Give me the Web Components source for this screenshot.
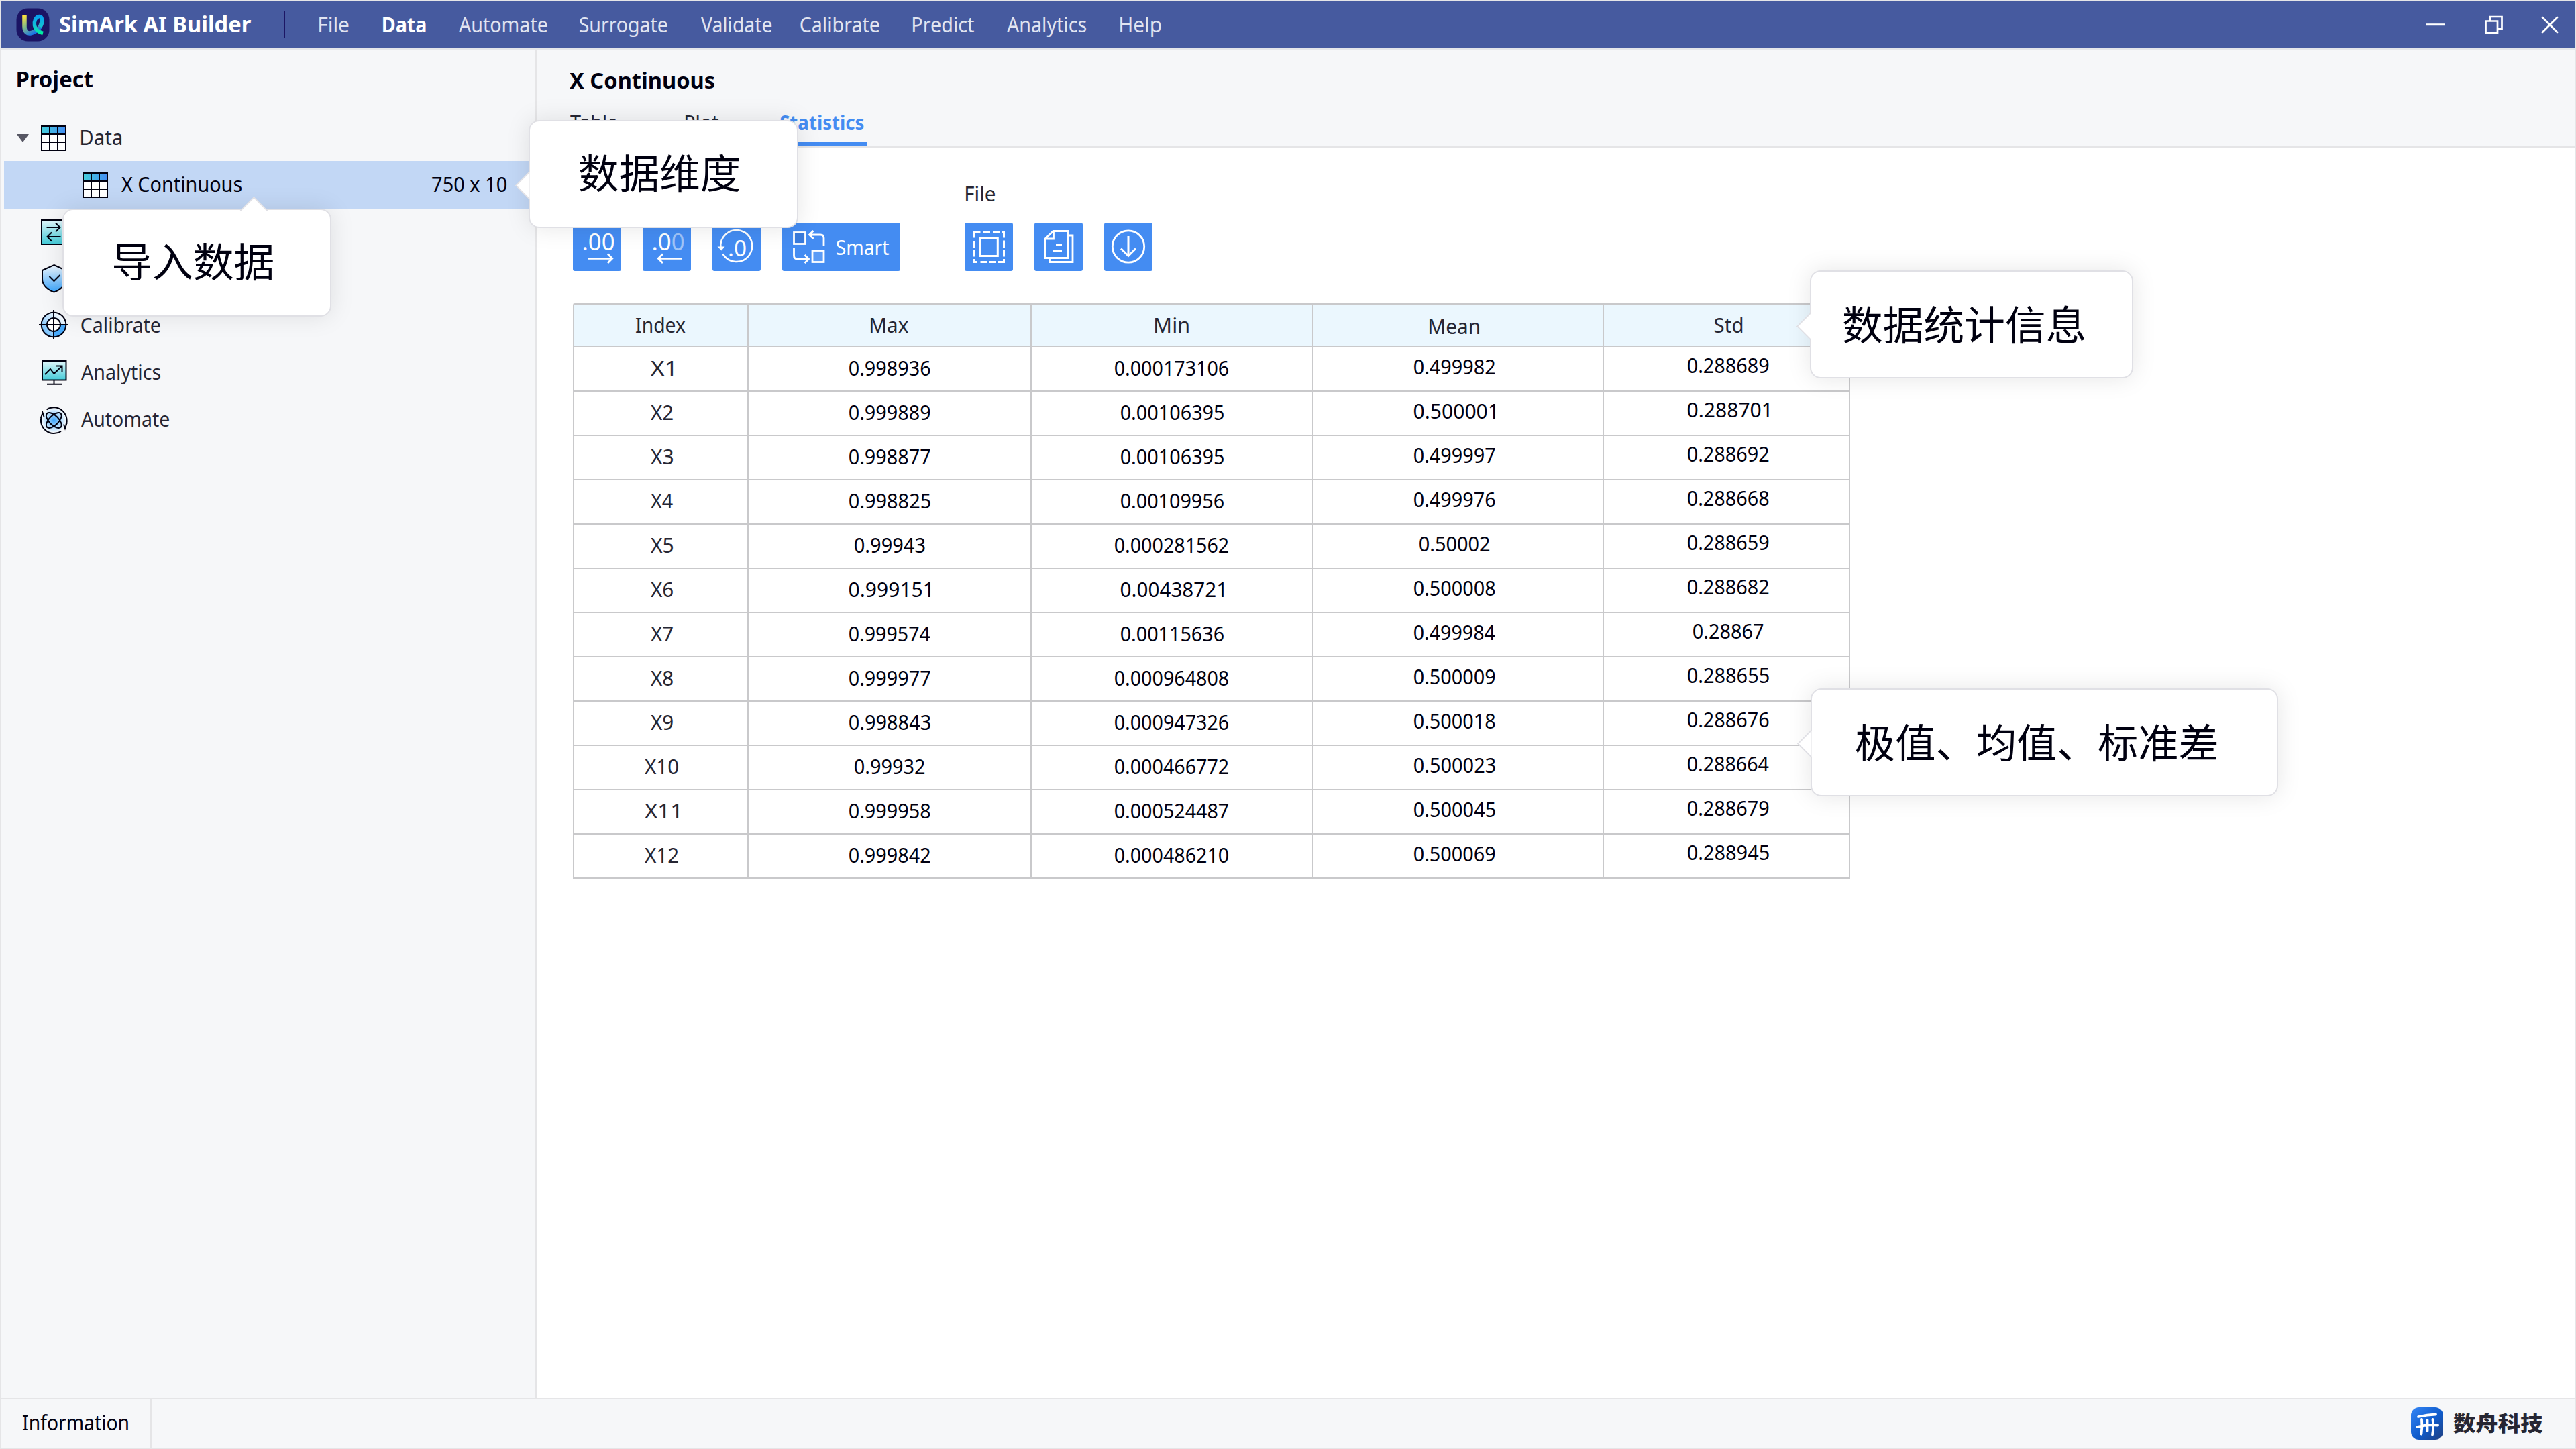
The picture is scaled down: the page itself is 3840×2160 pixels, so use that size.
<!DOCTYPE html>
<html lang="en">
<head>
<meta charset="utf-8">
<title>SimArk AI Builder</title>
<style>
    body{
        margin: 0;
        background-color: #fff;
        font-family: "Noto Sans", "Noto Sans CJK SC", sans-serif;
        font-size: 30px;
        color: #262633;
    }
</style>
</head>
<body>

<app-shell></app-shell>

<script>

function makeTemplate(html){
    const template = document.createElement('template');
    template.innerHTML = html;
    return template;
}

// one line of text, fitted so that its ink is exactly "w" pixels wide
const labelTemplate = makeTemplate(`
    <style>
    :host{
        display: block;
        flex: none;
        height: 40px;
        line-height: 40px;
        white-space: nowrap;
    }

    span{
        display: inline-block;
        transform-origin: 0 50%;
    }
    </style>
    <span><slot></slot></span>
`);

const pen = document.createElement('canvas').getContext('2d');

class FitLabel extends HTMLElement{
    constructor(){
        super();
        this.attachShadow({mode: 'open'});
        this.shadowRoot.appendChild(labelTemplate.content.cloneNode(true));
    }

    connectedCallback(){
        const width = Number(this.getAttribute('w'));
        const style = getComputedStyle(this);
        // measured at ten times the size, the canvas rounds to whole pixels
        pen.font = `${style.fontWeight} ${parseFloat(style.fontSize) * 10}px ${style.fontFamily}`;
        const m = pen.measureText(this.textContent);
        const left = m.actualBoundingBoxLeft / 10;
        const right = m.actualBoundingBoxRight / 10;
        const scale = width / (left + right);
        this.style.width = width + 'px';
        const span = this.shadowRoot.querySelector('span');
        span.style.transform = `translateX(${left * scale}px) scaleX(${scale})`;
    }
}


const icons = {
    logo: [50, 50, `
        <defs>
            <linearGradient id="u" x1="0" y1="0" x2="0.6" y2="1"><stop offset="0" stop-color="#ffe23a"/><stop offset="0.5" stop-color="#7fb98a"/><stop offset="1" stop-color="#1673e8"/></linearGradient>
            <linearGradient id="q" x1="0" y1="0" x2="0" y2="1"><stop offset="0" stop-color="#08a2ee"/><stop offset="0.55" stop-color="#10bfd6"/><stop offset="1" stop-color="#00ef9d"/></linearGradient>
        </defs>
        <rect x="0.5" y="0.5" width="49" height="49" rx="17" fill="#1b1464"/>
        <path d="M12.500 11V27C12.500 36 17 38.500 23 37C31 35 38 28 38.500 19" fill="none" stroke="url(#u)" stroke-width="6.500"/>
        <path d="M36 28C40 21 39.500 12 34.500 12.500C29 13 26.500 20 27.500 26C28.500 32 33 35.500 40 37.500" fill="none" stroke="url(#q)" stroke-width="5.500"/>`],
    minimize: [28, 28, `<path d="M0 13.700H28" stroke="#fff" stroke-width="3"/>`],
    restore: [28, 28, `<path d="M1.500 8.500H19V26H1.500ZM8 8V2H25.500V20H20" fill="none" stroke="#fff" stroke-width="2.700"/>`],
    close: [28, 28, `<path d="M3 3L25 25M25 3L3 25" stroke="#fff" stroke-width="2.800" stroke-linecap="round"/>`],
    grid: [50, 50, `
        <defs><linearGradient id="g"><stop offset="0" stop-color="#45cfdc"/><stop offset="1" stop-color="#438cf3"/></linearGradient></defs>
        <rect x="7" y="7" width="36" height="36" fill="#fff"/>
        <rect x="7" y="7" width="36" height="12" fill="url(#g)"/>
        <path d="M7 7H43V43H7ZM7 19H43M7 31H43M19 7V43M31 7V43" fill="none" stroke="#000010" stroke-width="2"/>`],
    swap: [50, 50, `
        <defs><linearGradient id="g" x2="0" y2="1"><stop offset="0" stop-color="#e2f6fb"/><stop offset="1" stop-color="#43cbd8"/></linearGradient></defs>
        <rect x="7" y="7" width="36" height="36" fill="url(#g)" stroke="#000010" stroke-width="2"/>
        <path d="M14.500 18H35M28 11.500L34.500 18L28 24.500M35.500 32H15M22 25.500L15.500 32L22 38.500" fill="none" stroke="#000010" stroke-width="2"/>`],
    shield: [50, 50, `
        <defs><linearGradient id="g" x2="0" y2="1"><stop offset="0" stop-color="#f0f8ff"/><stop offset="1" stop-color="#3ba4fb"/></linearGradient></defs>
        <path d="M25.500 4L43 12V25C43 34 35 41.500 25.500 44.500C16 41.500 8 34 8 25V12Z" fill="url(#g)" stroke="#000010" stroke-width="2"/>
        <path d="M18.500 21L25.500 28L34.500 19" fill="none" stroke="#000010" stroke-width="2"/>`],
    target: [50, 50, `
        <defs><linearGradient id="g" x1="1" y1="0" x2="0" y2="1"><stop offset="0.200" stop-color="#f4faff"/><stop offset="1" stop-color="#58b3fc"/></linearGradient></defs>
        <circle cx="25" cy="23" r="18.300" fill="url(#g)"/>
        <path d="M25 23H43.300A18.300 18.300 0 0 1 25 41.300Z" fill="#49aafb"/>
        <circle cx="25" cy="23" r="10" fill="#fff"/>
        <path d="M25 1V45M3 23H47" stroke="#000010" stroke-width="2"/>
        <g fill="none" stroke="#000010" stroke-width="2"><circle cx="25" cy="23" r="18.300"/><circle cx="25" cy="23" r="10"/></g>`],
    monitor: [50, 50, `
        <defs><linearGradient id="g" x2="0" y2="1"><stop offset="0" stop-color="#e2f6fb"/><stop offset="1" stop-color="#43cbd8"/></linearGradient></defs>
        <rect x="8" y="7" width="35.500" height="28.500" fill="url(#g)" stroke="#000010" stroke-width="2"/>
        <path d="M25.500 36V41.500M15 41.700H37M12 27L20 19L25.500 26L37 15M28.500 14.500H37.500V23.500" fill="none" stroke="#000010" stroke-width="2"/>`],
    atom: [50, 50, `
        <defs><radialGradient id="g"><stop offset="0" stop-color="#3ba4fb"/><stop offset="0.400" stop-color="#8dcafc"/><stop offset="1" stop-color="#f0f8fe"/></radialGradient></defs>
        <circle cx="25.300" cy="25.500" r="18" fill="url(#g)"/>
        <g fill="none" stroke="#000010" stroke-width="2">
            <ellipse cx="25.300" cy="25.500" rx="14.500" ry="7" transform="rotate(45 25.300 25.500)"/>
            <ellipse cx="25.300" cy="25.500" rx="14.500" ry="7" transform="rotate(-45 25.300 25.500)"/>
            <path d="M14.500 9.500A19.500 19.500 0 0 1 43.500 32.400M36 42A19.500 19.500 0 0 1 7.100 19"/>
            <path d="M6 22L8.500 14L10.500 20M44.600 29.500L42 37.500L40 31.500"/>
        </g>`],
    decMore: [72, 72, `
        <text x="13.500" y="40.500" textLength="49" lengthAdjust="spacingAndGlyphs" font-size="35" fill="#fff">.00</text>
        <path d="M23 53.300H58M52 46.500L58.700 53.300L52 60" fill="none" stroke="#fff" stroke-width="2.800"/>`],
    decLess: [72, 72, `
        <text x="13.500" y="40.500" textLength="49" lengthAdjust="spacingAndGlyphs" font-size="35" fill="#fff">.0<tspan fill-opacity="0.5">0</tspan></text>
        <path d="M59 53.300H24M30 46.500L23.300 53.300L30 60" fill="none" stroke="#fff" stroke-width="2.800"/>`],
    decReset: [72, 72, `
        <text x="23" y="49.500" textLength="28" lengthAdjust="spacingAndGlyphs" font-size="33" fill="#fff">.0</text>
        <path d="M12.500 38A23.500 23.500 0 1 1 15.500 46.500" fill="none" stroke="#fff" stroke-width="2.500"/>
        <path d="M7.500 35.500L13.500 41.500L18.500 35.500Z" fill="#fff"/>`],
    smart: [72, 72, `
        <g fill="none" stroke="#fff" stroke-width="2.800">
            <rect x="17.500" y="14.500" width="17" height="17" fill="#3a7bdc"/>
            <rect x="45" y="41.500" width="17" height="17" fill="#5c9cf6"/>
            <path d="M62 34V23Q62 18 57 18H41M46.500 12L40.500 18L46.500 24M17.500 38V49Q17.500 54 22.500 54H39M33.500 48L39.500 54L33.500 60"/>
        </g>`],
    selectAll: [72, 72, `
        <path d="M13.500 22.500V14.500H23.500M28 14.500H38M42 14.500H52M55 14.500H58.500V22.500M58.500 26.500V37M58.500 40.500V50.500M58.500 54V58.500H50M46 58.500H37M33 58.500H23.500M19 58.500H13.500V54M13.500 50.500V40.500M13.500 37V27" fill="none" stroke="#fff" stroke-width="3"/>
        <rect x="23.300" y="23.500" width="26" height="26" fill="none" stroke="#fff" stroke-width="3"/>`],
    copy: [72, 72, `
        <path d="M16 24L28 12.500H50V52.500H16ZM16 24H28.500V12.500M50 19H57V58.500H22.500V53M32 33.500H41M27 42H41" fill="none" stroke="#fff" stroke-width="2.800"/>`],
    download: [72, 72, `
        <circle cx="36" cy="35.500" r="23.700" fill="none" stroke="#fff" stroke-width="2.800"/>
        <path d="M36 20V49.500M25 38.500L36 49.500L47 38.500" fill="none" stroke="#fff" stroke-width="3"/>`],
    company: [48, 48, `
        <defs><linearGradient id="g" x2="1" y2="1"><stop offset="0" stop-color="#3586f6"/><stop offset="0.550" stop-color="#0f5bcb"/><stop offset="1" stop-color="#22407f"/></linearGradient></defs>
        <rect width="48" height="48" rx="12" fill="url(#g)"/>
        <path d="M11 14Q24 11 37 10.500M16 18Q17 29 15.500 39.500M24.500 19V35M32.500 18Q34 30 32 40.500M9 29Q24 25 40 26.500" fill="none" stroke="#fff" stroke-width="3.800" stroke-linecap="round"/>`]
};

class AppIcon extends HTMLElement{
    constructor(){
        super();
        this.attachShadow({mode: 'open'});
    }

    connectedCallback(){
        const [w, h, shapes] = icons[this.getAttribute('name')];
        this.shadowRoot.innerHTML = `
            <style>
            :host{ display: block; flex: none; }
            svg{ display: block; }
            </style>
            <svg width="${w}" height="${h}" viewBox="0 0 ${w} ${h}">${shapes}</svg>
        `;
    }
}


const titleTemplate = makeTemplate(`
    <style>
    :host{
        display: flex;
        align-items: center;
        box-sizing: border-box;
        height: 72px;
        padding-left: 22px;
        border-bottom: 2px solid #e5e6ea;
        background-color: #465a9f;
        color: #e1e4f1;
    }

    .name{
        margin: 0 49px 2px 15px;
        font-size: 32px;
        font-weight: 700;
        color: #fff;
    }

    .line{
        width: 2px;
        height: 40px;
        margin: 0 51px 2px 0;
        background-color: #1c1664;
    }

    nav{
        flex: 1;
        display: flex;
    }

    .on{
        font-weight: 700;
        color: #fff;
    }

    .window{
        display: flex;
        gap: 60px;
        padding-right: 23px;
    }
    </style>

    <app-icon name="logo"></app-icon>
    <fit-label class="name" w="285">SimArk AI Builder</fit-label>
    <div class="line"></div>
    <nav>
        <fit-label w="43.5">File</fit-label>
        <fit-label w="63.5" class="on" style="margin-left: 51.5px">Data</fit-label>
        <fit-label w="131.5" style="margin-left: 49px">Automate</fit-label>
        <fit-label w="130.5" style="margin-left: 49px">Surrogate</fit-label>
        <fit-label w="105" style="margin-left: 50.5px">Validate</fit-label>
        <fit-label w="117.5" style="margin-left: 43px">Calibrate</fit-label>
        <fit-label w="91" style="margin-left: 50.5px">Predict</fit-label>
        <fit-label w="118" style="margin-left: 48.5px">Analytics</fit-label>
        <fit-label w="60.5" style="margin-left: 51px">Help</fit-label>
    </nav>
    <div class="window">
        <app-icon name="minimize"></app-icon>
        <app-icon name="restore"></app-icon>
        <app-icon name="close" style="margin-left: -5px"></app-icon>
    </div>
`);

class TitleBar extends HTMLElement{
    constructor(){
        super();
        this.attachShadow({mode: 'open'});
        this.shadowRoot.appendChild(titleTemplate.content.cloneNode(true));
    }
}


const rowTemplate = makeTemplate(`
    <style>
    :host{
        display: flex;
        align-items: center;
        height: 70px;
        margin-left: 4px;
        padding-left: 49px;
    }

    :host([open]){
        padding-left: 19px;
    }

    :host([open])::before{
        content: "";
        width: 18px;
        height: 12px;
        margin: 0 12px 0 0;
        background-color: #565663;
        clip-path: polygon(0 0, 100% 0, 50% 100%);
    }

    :host([selected]){
        height: 72px;
        margin-top: -1px;
        margin-bottom: -1px;
        padding-left: 111px;
        background-color: #c2d7f5;
        color: #000010;
    }

    ::slotted(fit-label){
        margin: 0 0 2px 16px;
    }

    :host([selected]) ::slotted(fit-label){
        margin-left: 13.5px;
    }

    ::slotted(.size){
        margin-left: auto !important;
        margin-right: 43px !important;
    }
    </style>
    <slot></slot>
`);

class TreeRow extends HTMLElement{
    constructor(){
        super();
        this.attachShadow({mode: 'open'});
        this.shadowRoot.appendChild(rowTemplate.content.cloneNode(true));
    }
}


const sideTemplate = makeTemplate(`
    <style>
    :host{
        display: block;
        flex: none;
        box-sizing: border-box;
        width: 798px;
        padding-top: 24px;
        border-right: 2px solid #e5e5e7;
        background-color: #f6f7f9;
    }

    .title{
        margin: 0 0 33px 23.5px;
        font-size: 32px;
        font-weight: 700;
        color: #000010;
    }
    </style>

    <fit-label class="title" w="112">Project</fit-label>
    <tree-row open><app-icon name="grid"></app-icon><fit-label w="60">Data</fit-label></tree-row>
    <tree-row selected><app-icon name="grid"></app-icon><fit-label w="179">X Continuous</fit-label><fit-label class="size" w="111">750 x 10</fit-label></tree-row>
    <tree-row><app-icon name="swap"></app-icon></tree-row>
    <tree-row><app-icon name="shield"></app-icon></tree-row>
    <tree-row><app-icon name="target"></app-icon><fit-label w="117.5">Calibrate</fit-label></tree-row>
    <tree-row><app-icon name="monitor"></app-icon><fit-label w="118">Analytics</fit-label></tree-row>
    <tree-row><app-icon name="atom"></app-icon><fit-label w="131">Automate</fit-label></tree-row>
`);

class SideBar extends HTMLElement{
    constructor(){
        super();
        this.attachShadow({mode: 'open'});
        this.shadowRoot.appendChild(sideTemplate.content.cloneNode(true));
    }
}


const headTemplate = makeTemplate(`
    <style>
    :host{
        display: flex;
        flex-direction: column;
        box-sizing: border-box;
        height: 146px;
        padding: 26px 0 0 48.5px;
        border-bottom: 2px solid #e5e5e7;
        background-color: #f6f7f9;
    }

    .title{
        font-size: 32px;
        font-weight: 700;
        color: #000010;
    }

    .tabs{
        flex: 1;
        display: flex;
        margin-top: 23px;
    }

    .tab{
        box-sizing: border-box;
    }

    .on{
        padding: 0 4px 0 3px;
        border-bottom: 6px solid #448cf2;
        font-weight: 700;
        color: #448cf2;
    }
    </style>

    <fit-label class="title" w="216">X Continuous</fit-label>
    <div class="tabs">
        <div class="tab" style="margin-left: 1.5px"><fit-label w="70">Table</fit-label></div>
        <div class="tab" style="margin-left: 102px"><fit-label w="49">Plot</fit-label></div>
        <div class="tab on" style="margin-left: 89px"><fit-label w="124.5">Statistics</fit-label></div>
    </div>
`);

class PageHead extends HTMLElement{
    constructor(){
        super();
        this.attachShadow({mode: 'open'});
        this.shadowRoot.appendChild(headTemplate.content.cloneNode(true));
    }
}


const buttonTemplate = makeTemplate(`
    <style>
    :host{
        display: flex;
        align-items: center;
        height: 72px;
        border-radius: 3px;
        background-color: #448cf2;
        color: #fff;
    }

    ::slotted(fit-label){
        margin: 2px 17px 0 9px;
    }
    </style>
    <slot></slot>
`);

class ToolButton extends HTMLElement{
    constructor(){
        super();
        this.attachShadow({mode: 'open'});
        this.shadowRoot.appendChild(buttonTemplate.content.cloneNode(true));
    }
}


const toolbarTemplate = makeTemplate(`
    <style>
    :host{
        display: flex;
        align-items: flex-end;
        gap: 96px;
        height: 136px;
        padding: 48px 0 48px 54px;
    }

    .row{
        display: flex;
        gap: 32px;
    }

    .caption{
        margin: 0 0 23px 1.5px;
    }
    </style>

    <div class="row">
        <tool-button><app-icon name="decMore"></app-icon></tool-button>
        <tool-button><app-icon name="decLess"></app-icon></tool-button>
        <tool-button><app-icon name="decReset"></app-icon></tool-button>
        <tool-button><app-icon name="smart"></app-icon><fit-label w="78">Smart</fit-label></tool-button>
    </div>
    <div>
        <fit-label class="caption" w="43">File</fit-label>
        <div class="row">
            <tool-button><app-icon name="selectAll"></app-icon></tool-button>
            <tool-button><app-icon name="copy"></app-icon></tool-button>
            <tool-button><app-icon name="download"></app-icon></tool-button>
        </div>
    </div>
`);

class ToolBar extends HTMLElement{
    constructor(){
        super();
        this.attachShadow({mode: 'open'});
        this.shadowRoot.appendChild(toolbarTemplate.content.cloneNode(true));
    }
}


const heads = [['Index', 73.5], ['Max', 56], ['Min', 50], ['Mean', 74], ['Std', 41]];

const stats = [
    ['0.998936', '0.000173106', '0.499982', '0.288689'],
    ['0.999889', '0.00106395', '0.500001', '0.288701'],
    ['0.998877', '0.00106395', '0.499997', '0.288692'],
    ['0.998825', '0.00109956', '0.499976', '0.288668'],
    ['0.99943', '0.000281562', '0.50002', '0.288659'],
    ['0.999151', '0.00438721', '0.500008', '0.288682'],
    ['0.999574', '0.00115636', '0.499984', '0.28867'],
    ['0.999977', '0.000964808', '0.500009', '0.288655'],
    ['0.998843', '0.000947326', '0.500018', '0.288676'],
    ['0.99932', '0.000466772', '0.500023', '0.288664'],
    ['0.999958', '0.000524487', '0.500045', '0.288679'],
    ['0.999842', '0.000486210', '0.500069', '0.288945']
];

class StatsTable extends HTMLElement{
    constructor(){
        super();
        this.attachShadow({mode: 'open'});

        // every digit has the same advance
        const number = text => `<div class="cell"><fit-label w="${120.6 + 16.15 * (text.length - 8)}">${text}</fit-label></div>`;
        const head = heads.map(([text, w]) => `<div class="cell head"><fit-label w="${w}">${text}</fit-label></div>`).join('');
        const rows = stats.map((row, i) => `
            <div class="cell index"><fit-label w="${i < 9 ? 33 : 50}">X${i + 1}</fit-label></div>
            ${row.map(number).join('')}`).join('');

        this.shadowRoot.innerHTML = `
            <style>
            :host{
                display: grid;
                grid-template-columns: 260px 422px 420px 433px 367px;
                grid-template-rows: 64px;
                grid-auto-rows: 66px;
                width: 1902px;
                margin-left: 54px;
                border-top: 2px solid #c9c9cb;
                border-left: 2px solid #c9c9cb;
                border-top-left-radius: 3px;
                color: #000010;
            }

            .cell{
                display: flex;
                align-items: center;
                justify-content: center;
                box-sizing: border-box;
                padding-bottom: 2px;
                border-right: 2px solid #c9c9cb;
                border-bottom: 2px solid #c9c9cb;
            }

            .cell:nth-of-type(5n + 4){
                padding: 0 11px 6px 0;
            }

            .cell:nth-of-type(5n + 5){
                padding: 0 0 10px 5px;
            }

            .index{
                padding-left: 2px;
                color: #262633;
            }

            .cell.head{
                padding-top: 0;
                padding-bottom: 0;
                background-color: #ebf7fe;
                color: #262633;
            }

            .cell.head:nth-of-type(4){
                padding-top: 4px;
            }
            </style>
            ${head}${rows}
        `;
    }
}


const statusTemplate = makeTemplate(`
    <style>
    :host{
        display: flex;
        align-items: center;
        box-sizing: border-box;
        height: 74px;
        border-top: 2px solid #e5e5e7;
        background-color: #f6f7f9;
        color: #000010;
    }

    .info{
        display: flex;
        align-items: center;
        box-sizing: border-box;
        width: 224px;
        height: 72px;
        padding: 0 0 2px 32px;
        border-right: 2px solid #e5e5e7;
    }

    .brand{
        display: flex;
        align-items: center;
        gap: 14.5px;
        margin-left: auto;
        padding-right: 48px;
        font-family: "Noto Sans CJK SC", sans-serif;
        font-size: 31px;
        font-weight: 900;
        color: #262633;
    }

    .brand fit-label{
        margin-bottom: 4px;
    }
    </style>

    <div class="info"><fit-label w="157">Information</fit-label></div>
    <div class="brand" lang="zh-CN">
        <app-icon name="company"></app-icon>
        <fit-label w="133.5">数舟科技</fit-label>
    </div>
`);

class StatusBar extends HTMLElement{
    constructor(){
        super();
        this.attachShadow({mode: 'open'});
        this.shadowRoot.appendChild(statusTemplate.content.cloneNode(true));
    }
}


// speech bubble over the page, its arrow is a square turned by 45 degrees
const tipTemplate = makeTemplate(`
    <style>
    :host{
        position: absolute;
        display: flex;
        align-items: center;
        box-sizing: border-box;
        height: 161px;
        padding-bottom: 10px;
        border: 2px solid #e0e0e5;
        border-radius: 16px;
        background-color: #fff;
        box-shadow: 0 0 36px rgba(0, 0, 20, 0.1);
        font-family: "Noto Sans CJK SC", sans-serif;
        font-size: 60px;
        color: #000010;
    }

    .arrow{
        position: absolute;
        box-sizing: border-box;
        width: 31px;
        height: 31px;
        left: -16px;
        top: var(--arrow);
        margin-top: -15.5px;
        transform: rotate(-45deg);
        border: 2px solid #e0e0e5;
        border-right-color: transparent;
        border-bottom-color: transparent;
        background: #fff padding-box;
        clip-path: polygon(0 0, 100% 0, 0 100%);
    }

    :host([up]) .arrow{
        left: var(--arrow);
        top: -14px;
        margin: 0 0 0 -15.5px;
        transform: rotate(45deg);
    }
    </style>
    <div class="arrow"></div>
    <slot></slot>
`);

class TipBox extends HTMLElement{
    constructor(){
        super();
        this.attachShadow({mode: 'open'});
        this.shadowRoot.appendChild(tipTemplate.content.cloneNode(true));
    }
}


const shellTemplate = makeTemplate(`
    <style>
    :host{
        position: relative;
        display: flex;
        flex-direction: column;
        box-sizing: border-box;
        width: 3840px;
        height: 2160px;
        overflow: hidden;
        border: 2px solid #e5e5e7;
    }

    .body{
        flex: 1;
        display: flex;
    }

    main{
        flex: 1;
    }

    /* tips are placed from inside the 2px frame */
    .import{ left: 91px; top: 309px; width: 401px; padding-left: 74px; --arrow: 283px; }
    .size{ left: 786px; top: 177px; width: 402px; padding-left: 73.5px; --arrow: 95px; }
    .stats{ left: 2696px; top: 401px; width: 482px; padding-left: 48px; padding-bottom: 6px; --arrow: 81.5px; }
    .terms{ left: 2697px; top: 1024px; width: 697px; padding-left: 64.5px; padding-bottom: 5px; --arrow: 80px; }
    </style>

    <title-bar></title-bar>
    <div class="body">
        <side-bar></side-bar>
        <main>
            <page-head></page-head>
            <tool-bar></tool-bar>
            <stats-table></stats-table>
        </main>
    </div>
    <status-bar></status-bar>

    <tip-box class="import" lang="zh-CN" up><fit-label w="238.5">导入数据</fit-label></tip-box>
    <tip-box class="size" lang="zh-CN"><fit-label w="238.5">数据维度</fit-label></tip-box>
    <tip-box class="stats" lang="zh-CN"><fit-label w="359.5">数据统计信息</fit-label></tip-box>
    <tip-box class="terms" lang="zh-CN"><fit-label w="539">极值、均值、标准差</fit-label></tip-box>
`);

class AppShell extends HTMLElement{
    constructor(){
        super();
        this.attachShadow({mode: 'open'});
        this.shadowRoot.appendChild(shellTemplate.content.cloneNode(true));
    }
}


window.customElements.define('fit-label', FitLabel);
window.customElements.define('app-icon', AppIcon);
window.customElements.define('title-bar', TitleBar);
window.customElements.define('tree-row', TreeRow);
window.customElements.define('side-bar', SideBar);
window.customElements.define('page-head', PageHead);
window.customElements.define('tool-button', ToolButton);
window.customElements.define('tool-bar', ToolBar);
window.customElements.define('stats-table', StatsTable);
window.customElements.define('status-bar', StatusBar);
window.customElements.define('tip-box', TipBox);
window.customElements.define('app-shell', AppShell);

</script>
</body>
</html>
